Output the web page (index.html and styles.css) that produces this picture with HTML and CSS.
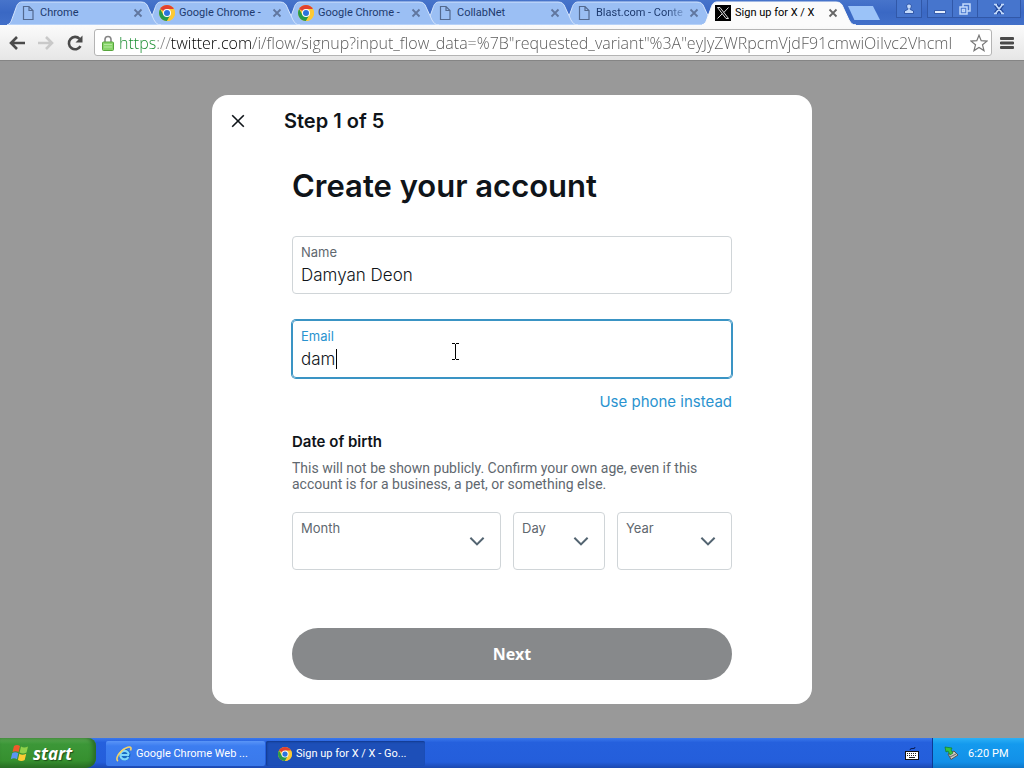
FILE: index.html
```html
<!DOCTYPE html>
<html lang="en">
<head>
<meta charset="utf-8">
<title>Sign up for X / X</title>
<link rel="stylesheet" href="styles.css">
</head>
<body>

<!-- shared shapes -->
<svg class="defs" width="0" height="0" aria-hidden="true">
    <symbol id="tab-shape" viewBox="0 0 154 24" preserveAspectRatio="none">
        <path d="M0 24 C3 23 4 21 5 18 L9 7 C10 3 12 1 15 1 H134 C138 1 140 3 141 6 L147 19 C149 22 150 24 154 24 Z" />
    </symbol>
    <symbol id="page" viewBox="0 0 16 16">
        <path d="M3.5 1.5 H9 L13 5.5 V14.5 H3.5 Z M9 1.5 V5.5 H13" fill="none" stroke="#53698f" stroke-width="1.2" />
    </symbol>
    <symbol id="chrome" viewBox="0 0 16 16">
        <circle cx="8" cy="8" r="8" fill="#fcc934" />
        <path d="M8 8 L1.1 4 A8 8 0 0 1 14.9 4 Z" fill="#e2402f" />
        <path d="M1.1 4 A8 8 0 0 0 8 16 L11.5 10 L8 8 L4.5 10 Z" fill="#279a4b" />
        <path d="M8 4 H14.9 A8 8 0 0 1 8 16 L11.5 10 Z" fill="#fcc934" />
        <circle cx="8" cy="8" r="4" fill="#fff" />
        <circle cx="8" cy="8" r="3" fill="#2c73dc" />
    </symbol>
    <symbol id="cross" viewBox="0 0 10 10">
        <path d="M1.5 1.5 L8.5 8.5 M8.5 1.5 L1.5 8.5" fill="none" stroke="currentColor" stroke-width="1.8" />
    </symbol>
    <symbol id="chevron" viewBox="0 0 24 24">
        <path d="M3.2 8.9 L4.9 7.2 L12 14.3 L19.1 7.2 L20.8 8.9 L12 17.7 Z" fill="#536471" />
    </symbol>
</svg>

<header class="browser">
    <div class="tabstrip">
        <div class="tab">
            <svg class="tab-bg"><use href="#tab-shape" /></svg>
            <svg class="favicon"><use href="#page" /></svg>
            <span class="tab-title">Chrome</span>
            <button class="tab-close" aria-label="Close tab"><svg><use href="#cross" /></svg></button>
        </div>
        <div class="tab">
            <svg class="tab-bg"><use href="#tab-shape" /></svg>
            <svg class="favicon"><use href="#chrome" /></svg>
            <span class="tab-title">Google Chrome -</span>
            <button class="tab-close" aria-label="Close tab"><svg><use href="#cross" /></svg></button>
        </div>
        <div class="tab">
            <svg class="tab-bg"><use href="#tab-shape" /></svg>
            <svg class="favicon"><use href="#chrome" /></svg>
            <span class="tab-title">Google Chrome -</span>
            <button class="tab-close" aria-label="Close tab"><svg><use href="#cross" /></svg></button>
        </div>
        <div class="tab">
            <svg class="tab-bg"><use href="#tab-shape" /></svg>
            <svg class="favicon"><use href="#page" /></svg>
            <span class="tab-title">CollabNet</span>
            <button class="tab-close" aria-label="Close tab"><svg><use href="#cross" /></svg></button>
        </div>
        <div class="tab">
            <svg class="tab-bg"><use href="#tab-shape" /></svg>
            <svg class="favicon"><use href="#page" /></svg>
            <span class="tab-title fade">Blast.com - Conte</span>
            <button class="tab-close" aria-label="Close tab"><svg><use href="#cross" /></svg></button>
        </div>
        <div class="tab active">
            <svg class="tab-bg"><use href="#tab-shape" /></svg>
            <svg class="favicon" viewBox="0 0 16 16">
                <rect width="16" height="16" fill="#000" />
                <path d="M2.5 2.5 H5 L13.5 13.5 H11 Z M13.5 2.5 L8.8 7.5 M7.3 8.7 L2.5 13.5" fill="none" stroke="#ddd" />
            </svg>
            <span class="tab-title">Sign up for X / X</span>
            <button class="tab-close" aria-label="Close tab"><svg><use href="#cross" /></svg></button>
        </div>
        <button class="new-tab" aria-label="New tab"></button>
        <div class="window-buttons">
            <button class="profile" aria-label="Profile">
                <svg viewBox="0 0 12 12"><path d="M6 1 a2.3 2.3 0 0 1 1.2 4.3 V6.5 L10.5 8 V10.5 H1.5 V8 L4.8 6.5 V5.3 A2.3 2.3 0 0 1 6 1 Z" fill="#c3dafb" stroke="#20469b" stroke-width=".8" /></svg>
            </button>
            <div class="window-group">
                <button aria-label="Minimize"><svg viewBox="0 0 12 12"><path d="M.5 7.5 H11.5 V10.5 H.5 Z" fill="#e4eefd" stroke="#20469b" stroke-width=".8" /></svg></button>
                <button aria-label="Restore"><svg viewBox="0 0 12 12"><path d="M4 3.5 V1 H11 V8 H8.5 M1 4 H8 V11 H1 Z M3.5 6.5 H5.5 V8.5 H3.5 Z" fill="none" stroke="#c3dafb" stroke-width="1.5" /></svg></button>
                <button aria-label="Close"><svg viewBox="0 0 12 12"><path d="M2.5 1.5 L9.5 10.5 M9.5 1.5 L2.5 10.5" stroke="#20469b" stroke-width="4" /><path d="M2.5 1.5 L9.5 10.5 M9.5 1.5 L2.5 10.5 M1 1.5 H4 M8 1.5 H11 M1 10.5 H4 M8 10.5 H11" stroke="#c3dafb" stroke-width="1.7" /></svg></button>
            </div>
        </div>
    </div>

    <div class="toolbar">
        <button class="nav-button" aria-label="Back">
            <svg viewBox="0 0 18 18"><path d="M17 9 H3 M9 3 L3 9 L9 15" fill="none" stroke="#4a4a4a" stroke-width="2.6" /></svg>
        </button>
        <button class="nav-button" aria-label="Forward" disabled>
            <svg viewBox="0 0 18 18"><path d="M1 9 H15 M9 3 L15 9 L9 15" fill="none" stroke="#c9c9c9" stroke-width="2.6" /></svg>
        </button>
        <button class="nav-button" aria-label="Reload">
            <svg viewBox="0 0 18 18"><path d="M14.5 12.2 A6.2 6.2 0 1 1 13.6 4.8" fill="none" stroke="#4a4a4a" stroke-width="2.6" /><path d="M16.5 1.5 V8.5 H9.5 Z" fill="#4a4a4a" /></svg>
        </button>
        <div class="omnibox">
            <svg class="lock" viewBox="0 0 12 16"><path d="M3 8 V4.5 A3 3 0 0 1 9 4.5 V8" fill="none" stroke="#858585" stroke-width="1.6" /><rect x=".5" y="7" width="11" height="8.5" rx="1" fill="#88d56a" stroke="#57a53d" /><path d="M2 9.5 H10 M2 12 H10" stroke="#b5e89f" /></svg>
            <input class="url" type="text" aria-label="Address" spellcheck="false" value="https://twitter.com/i/flow/signup?input_flow_data=%7B&quot;requested_variant&quot;%3A&quot;eyJyZWRpcmVjdF91cmwiOiIvc2Vhcml">
            <button class="star" aria-label="Bookmark this page">
                <svg viewBox="0 0 18 18"><path d="M9 1.2 L11.2 6.7 L17 7.1 L12.5 10.8 L14 16.6 L9 13.4 L4 16.6 L5.5 10.8 L1 7.1 L6.8 6.7 Z" fill="#fff" stroke="#777" stroke-width="1.2" /></svg>
            </button>
        </div>
        <button class="menu" aria-label="Menu">
            <svg viewBox="0 0 14 14"><path d="M1 2.5 H13 M1 7 H13 M1 11.5 H13" stroke="#4a4a4a" stroke-width="2.8" stroke-linecap="round" /></svg>
        </button>
    </div>
</header>

<main class="page">
    <form class="modal">
        <div class="modal-header">
            <button class="modal-close" type="button" aria-label="Close">
                <svg viewBox="0 0 14 14"><path d="M1.2 1.2 L12.8 12.8 M12.8 1.2 L1.2 12.8" stroke="#0f1419" stroke-width="1.6" /></svg>
            </button>
            <h2 class="step">Step 1 of 5</h2>
        </div>
        <div class="modal-body">
            <h1 class="heading">Create your account</h1>

            <div class="field">
                <label for="name">Name</label>
                <input id="name" type="text" value="Damyan Deon" spellcheck="false">
            </div>

            <div class="field focused">
                <label for="email">Email</label>
                <input id="email" type="text" value="dam" spellcheck="false">
                <span class="caret"></span>
                <svg class="pointer" viewBox="0 0 9 17"><path d="M1 .5 H4 M5 .5 H8 M4.5 1 V16 M1 16.5 H4 M5 16.5 H8" stroke="#000" /></svg>
            </div>

            <a class="use-phone" href="#">Use phone instead</a>

            <h3 class="dob">Date of birth</h3>
            <p class="dob-note">This will not be shown publicly. Confirm your own age, even if this account is for a business, a pet, or something else.</p>

            <div class="selects">
                <div class="select">
                    <label for="month">Month</label>
                    <select id="month"><option></option></select>
                    <svg><use href="#chevron" /></svg>
                </div>
                <div class="select">
                    <label for="day">Day</label>
                    <select id="day"><option></option></select>
                    <svg><use href="#chevron" /></svg>
                </div>
                <div class="select">
                    <label for="year">Year</label>
                    <select id="year"><option></option></select>
                    <svg><use href="#chevron" /></svg>
                </div>
            </div>

            <button class="next" type="button">Next</button>
        </div>
    </form>
</main>

<footer class="taskbar">
    <button class="start">
        <svg viewBox="0 0 20 20">
            <path d="M4 3 Q7 1 10 3 L8.6 9 Q5.5 7.3 2.5 9 Z" fill="#f0592b" />
            <path d="M11 3.5 Q14 5.5 18 3.5 L16.5 9.5 Q13 11.5 9.6 9.5 Z" fill="#8fd14a" />
            <path d="M2.2 10.2 Q5 8.5 8.3 10.2 L7 16.2 Q4 14.5 .8 16.2 Z" fill="#5b95f2" />
            <path d="M9.3 10.8 Q12.5 12.6 16.2 10.8 L14.7 17 Q11.5 19 7.9 17 Z" fill="#fbcc34" />
        </svg>
        <span>start</span>
    </button>
    <div class="tasks">
        <button class="task">
            <svg viewBox="0 0 16 16">
                <circle cx="8.5" cy="8.8" r="6" fill="#1668c4" />
                <path d="M13 9 H5 M12.4 11 A4.3 4.3 0 1 1 12.8 8.5" fill="none" stroke="#7fd6fb" stroke-width="2.2" />
                <path d="M2 15 C-1 13 3 5 10 2 C14 0 16 1 14.5 4.5" fill="none" stroke="#f3d36a" stroke-width="1.6" />
            </svg>
            <span>Google Chrome Web ...</span>
        </button>
        <button class="task current">
            <svg class="small"><use href="#chrome" /></svg>
            <span>Sign up for X / X - Go...</span>
        </button>
    </div>
    <button class="keyboard" aria-label="Keyboard">
        <svg viewBox="0 0 14 14"><path d="M5 4 Q5 2 8 2.5 Q10 3 10 1" fill="none" stroke="#0a1c55" /><rect x=".5" y="5.5" width="13" height="8" fill="#fff" stroke="#111" /><path d="M2 7.5 H12 M2 9.5 H12" stroke="#222" stroke-dasharray="1 1" /><path d="M4 11.5 H10" stroke="#222" /></svg>
    </button>
    <div class="tray">
        <svg viewBox="0 0 16 16"><path d="M5 9 L11 6 L15 10 L8 14.5 Z" fill="#c9c9c1" stroke="#555" /><path d="M7 12 L13 9" stroke="#666" /><path d="M2 2 L9 3 L8 5 L10 8 L7 10 L5 6 L3 7 Z" fill="#35c43e" stroke="#147b26" stroke-width=".7" /></svg>
        <span>6:20 PM</span>
    </div>
</footer>

</body>
</html>
```
FILE: styles.css
```css
* {
    box-sizing: border-box;
}
body {
    margin: 0;
    min-height: 100vh;
    display: flex;
    flex-direction: column;
    background: #999;
    font-family: Inter, "Noto Sans", sans-serif;
    color: #0f1419;
}
button {
    display: flex;
    align-items: center;
    justify-content: center;
    margin: 0;
    padding: 0;
    border: 0;
    background: none;
    font-family: inherit;
    color: inherit;
}
.defs {
    position: absolute;
}

/* browser chrome */
.browser,
.taskbar {
    font-family: Roboto, "Noto Sans", sans-serif;
    font-size: 11px;
}
.tabstrip {
    display: flex;
    height: 25px;
    padding: 1px 4px 0 7px;
    background: linear-gradient(#4774cb, #3a68c4 50%, #4270c9);
}
.tab {
    position: relative;
    flex: 0 1 154px;
    display: flex;
    align-items: center;
    min-width: 0;
    margin-right: -15px;
    padding: 0 18px 0 13px;
    color: #1d3a6e;
}
.tab:nth-child(1) { z-index: 5; }
.tab:nth-child(2) { z-index: 4; }
.tab:nth-child(3) { z-index: 3; }
.tab:nth-child(4) { z-index: 2; }
.tab:nth-child(5) { z-index: 1; }
.tab.active {
    z-index: 6;
    color: #000;
}
.tab-bg {
    position: absolute;
    inset: 0;
    width: 100%;
    height: 100%;
    fill: #9bbff4;
    stroke: #d3e4fd;
}
.active .tab-bg {
    fill: #fbfbfb;
    stroke: #fbfbfb;
}
.favicon {
    position: relative;
    flex: none;
    width: 16px;
    height: 16px;
}
.tab-title {
    position: relative;
    flex: 1;
    margin-left: 4px;
    overflow: hidden;
    white-space: nowrap;
    line-height: 16px;
}
.tab-title.fade {
    mask-image: linear-gradient(to right, #000 75%, transparent);
}
.tab-close {
    position: relative;
    color: #60769f;
}
.active .tab-close {
    color: #666;
}
.tab-close svg {
    width: 10px;
    height: 10px;
}
.new-tab {
    width: 32px;
    height: 14px;
    margin: 5px 0 0 7px;
    background: #9bc3f8;
    clip-path: polygon(0 0, 78% 0, 100% 100%, 20% 100%);
}
.window-buttons {
    display: flex;
    gap: 7px;
    height: 17px;
    margin: -1px 0 0 auto;
}
.window-buttons button {
    width: 24px;
    background: #4675cd;
    box-shadow: 0 0 0 1px #3158a8;
}
.window-buttons .window-group button:last-child {
    width: 42px;
}
.window-buttons svg {
    width: 12px;
    height: 12px;
}
.window-group {
    display: flex;
    gap: 1px;
}

.toolbar {
    display: flex;
    align-items: center;
    height: 36px;
    padding: 0 10px 0 8px;
    border-bottom: 1px solid #858585;
    background: linear-gradient(#fbfbfb, #e6e6e6);
}
.nav-button {
    width: 18px;
    height: 18px;
    margin-right: 11px;
}
.nav-button svg {
    width: 18px;
    height: 18px;
}
.omnibox {
    flex: 1;
    display: flex;
    align-items: center;
    min-width: 0;
    height: 27px;
    margin-left: -1px;
    padding: 0 3px 0 7px;
    border: 1px solid #b4b4b4;
    border-radius: 3px;
    background: #fff;
}
.lock {
    flex: none;
    width: 12px;
    height: 16px;
    margin-right: 5px;
}
.url {
    flex: 1;
    min-width: 0;
    padding: 0;
    border: 0;
    outline: none;
    font-family: "Open Sans", "Noto Sans", sans-serif;
    font-size: 16px;
    font-weight: 300;
    line-height: 24px;
    color: transparent;
    /* scheme, separator, host, path */
    background: linear-gradient(to right, #138a2b 37px, #777 37px, #777 52px, #000 52px, #000 133px, #555 133px);
    -webkit-background-clip: text;
    background-clip: text;
}
.star svg {
    width: 18px;
    height: 18px;
}
.menu {
    margin-left: 8px;
}
.menu svg {
    width: 14px;
    height: 14px;
}

/* sign up dialog */
.page {
    flex: 1;
    display: flex;
    align-items: center;
    justify-content: center;
}
.modal {
    width: 100%;
    max-width: 600px;
    border-radius: 16px;
    background: #fff;
}
.modal-header {
    display: flex;
    align-items: center;
    height: 52px;
    padding: 0 16px;
}
.modal-close {
    width: 20px;
    height: 20px;
    margin-right: 36px;
}
.modal-close svg {
    width: 14px;
    height: 14px;
}
.step {
    margin: 0;
    font-size: 20px;
    font-weight: 600;
    line-height: 24px;
}
.modal-body {
    display: flex;
    flex-direction: column;
    padding: 20px 80px 24px;
}
.heading {
    margin: 0 0 31px;
    font-size: 31px;
    font-weight: 600;
    line-height: 38px;
}
.field {
    position: relative;
    height: 58px;
    padding: 7px 8px;
    border: 1px solid #d0d5d8;
    border-radius: 4px;
}
.field label,
.select label {
    display: block;
    font-size: 13px;
    line-height: 16px;
    color: #5f686f;
}
.field input {
    display: block;
    width: 100%;
    height: 24px;
    margin-top: 3px;
    padding: 0;
    border: 0;
    outline: none;
    background: none;
    font-family: inherit;
    font-size: 17px;
    font-weight: 300;
    color: #0f1419;
}
.focused {
    margin-top: 26px;
    border-color: #3a94c4;
    box-shadow: 0 0 0 1px #3a94c4;
}
.focused label {
    color: #2a93cf;
}
.caret {
    position: absolute;
    left: 43px;
    top: 28px;
    width: 1px;
    height: 20px;
    background: #000;
}
.pointer {
    position: absolute;
    left: 158px;
    top: 22px;
    width: 9px;
    height: 17px;
}
.use-phone {
    align-self: flex-end;
    margin-top: 14px;
    font-size: 15px;
    line-height: 20px;
    color: #2a93cf;
    text-decoration: none;
}
.dob {
    margin: 20px 0 8px;
    font-size: 15px;
    font-weight: 600;
    line-height: 20px;
}
.dob-note {
    margin: 0 0 20px;
    font-family: Roboto, "Noto Sans", sans-serif;
    font-size: 14px;
    line-height: 16px;
    color: #5f686f;
}
.selects {
    display: grid;
    grid-template-columns: 209fr 92fr 115fr;
    gap: 12px;
}
/* label, control and arrow share one cell */
.select {
    display: grid;
    height: 58px;
    border: 1px solid #d0d5d8;
    border-radius: 4px;
}
.select > * {
    grid-area: 1 / 1;
}
.select label {
    padding: 7px 8px;
}
.select select {
    width: 100%;
    border: 0;
    appearance: none;
    background: none;
}
.select svg {
    align-self: center;
    justify-self: end;
    width: 20px;
    height: 20px;
    margin-right: 13px;
    pointer-events: none;
}
.next {
    height: 52px;
    margin-top: 58px;
    border-radius: 26px;
    background: #87898b;
    font-family: "Noto Sans", sans-serif;
    font-size: 16px;
    font-weight: 700;
    color: #fff;
}

/* taskbar */
.taskbar {
    display: flex;
    height: 30px;
    background: linear-gradient(#3a78ec, #2560dd 15%, #245edb 80%, #1b48b0);
    color: #fff;
}
.start {
    gap: 3px;
    width: 96px;
    padding-right: 14px;
    border-radius: 0 8px 10px 0;
    background: linear-gradient(#5eac56, #3c9738 20%, #36902f 75%, #2a7125);
    box-shadow: inset -3px 0 4px #2a6b26;
    font-family: "Open Sans", sans-serif;
    font-size: 17px;
    font-style: italic;
    font-weight: 700;
    text-shadow: 1px 1px 1px #1c4d18;
}
.start svg {
    width: 20px;
    height: 20px;
}
.tasks {
    flex: 1;
    display: flex;
    gap: 1px;
    padding: 3px 0 2px 10px;
}
.task {
    justify-content: flex-start;
    gap: 4px;
    width: 159px;
    padding-left: 10px;
    border-radius: 2px;
    background: linear-gradient(#5a95f7, #3c7df0 20%, #3a79ea);
    font-size: inherit;
}
.task.current {
    padding-left: 12px;
    background: #1d4fb8;
    box-shadow: inset 1px 1px 2px #123a8d;
}
.task svg {
    width: 16px;
    height: 16px;
}
.task .small {
    width: 14px;
    height: 14px;
}
.keyboard {
    margin-right: 13px;
}
.keyboard svg {
    width: 14px;
    height: 14px;
}
.tray {
    display: flex;
    align-items: center;
    gap: 9px;
    width: 92px;
    padding-left: 10px;
    border-left: 1px solid #0d3a94;
    background: linear-gradient(#2cb0f5, #149aee 20%, #1290e8 80%, #0f76c8);
}
.tray svg {
    width: 16px;
    height: 16px;
}
```
